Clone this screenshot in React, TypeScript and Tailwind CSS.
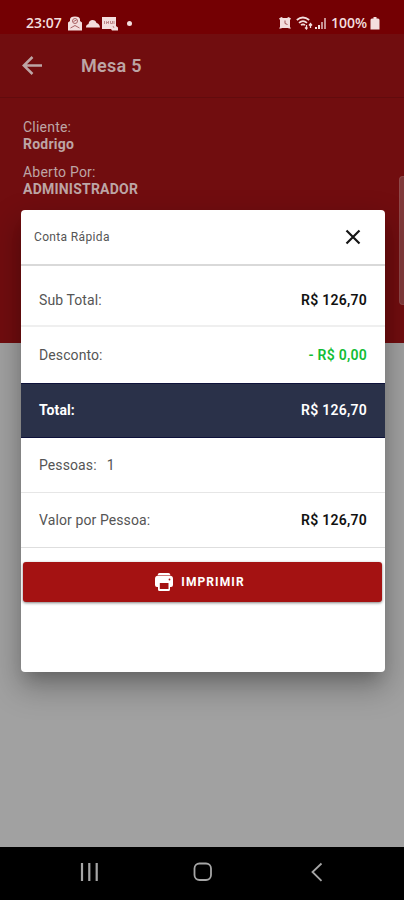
import type { ReactNode } from "react"

type RowProps = { label: string; value?: string; className?: string; valueClass?: string; children?: ReactNode }

function Row({ label, value, className = "", valueClass = "text-[#111]", children }: RowProps) {
  return (
    <div className={"flex items-center justify-between px-[18px] " + className}>
      <span>{label}{children}</span>
      {value && <span className={"text-[14px] font-semibold tracking-[0.25px] " + valueClass}>{value}</span>}
    </div>
  )
}

function StatusBar() {
  return (
    <div className="flex h-[34px] items-start justify-between bg-[#740003] pt-[14px] pr-[24px] pl-[26px] text-[#f3dede]">
      <div className="flex h-[18px] items-center">
        <span className="w-[41px] font-['Open_Sans',sans-serif] text-[14px] leading-[18px] font-semibold">23:07</span>
        <svg width="16" height="15" viewBox="0 0 16 15" fill="currentColor">
          <path d="M1 6.500 3 5V3.500Q3 .5 8 .5t5 3V5l2 1.500v8H1z" />
          <path d="M5.500 5q0-2.500 2.500-2.500T10.500 5 8 7.500 5.500 5M6.500 5.500l3-1.500M3.500 12 8 9.500l4.500 2.500" fill="none" stroke="#a15557" strokeWidth="0.900" />
        </svg>
        <svg className="ml-[3px]" width="14" height="15" viewBox="0 0 14 15" fill="currentColor">
          <path d="M0 11.500C0 9 1.200 8.500 2.500 8 3 5 4.500 4 6.500 4s3.500 1 4 3c2 .5 3.200 1.800 3.500 4.500z" />
        </svg>
        <svg className="ml-[2px]" width="16" height="15" viewBox="0 0 16 15" fill="currentColor">
          <path d="M0 1h14v9l2 1.500v3H10L9 13H0z" />
          <path d="M2.500 5v3M4.500 8V5.500l2 2V5M8.500 5v2.500h2V5M12 5v3M11 10l1 2" fill="none" stroke="#b87f80" strokeWidth="0.900" />
        </svg>
        <span className="ml-[9px] h-[5px] w-[5px] rounded-full bg-current" />
      </div>
      <div className="flex h-[18px] items-center">
        <svg width="12" height="14" viewBox="0 0 12 14" fill="currentColor">
          <path d="M0 2.500 2.500 1 4 2h4l1.500-1L12 2.500 11 4v7l1 1.500h-2L9 12H3l-1 .5H0L1 11V4z" />
          <path d="M6 4.500V7.500l2.500 1" fill="none" stroke="#a15557" />
        </svg>
        <svg className="ml-[5px]" width="17" height="14" viewBox="0 0 17 14" fill="none" stroke="currentColor" strokeWidth="1.700">
          <path d="M.8 4q6-5 12.400 0M3 6.800q4-3.500 8 0M5 9.200q2-1.800 4 0" />
          <path d="M10.500 9v4m-1.500-1.500 1.500 1.500 1-1.500M14.500 12V7.500m-1.500 2 1.500-2L16 9.500" strokeWidth="1.300" />
        </svg>
        <svg className="ml-[2px]" width="12" height="14" viewBox="0 0 12 14" fill="currentColor">
          <path d="M0 11h2v2H0zM3 9h2v4H3z" />
          <path d="M6 6h2v7H6zM9 2h2v11H9z" opacity=".65" />
        </svg>
        <span className="ml-[4px] w-[39px] font-['Open_Sans',sans-serif] text-[14px] leading-[18px] font-semibold">100%</span>
        <svg width="10" height="13" viewBox="0 0 10 13" fill="currentColor"><path d="M3.500 0h3v1.500H8q1.500 0 1.500 1.500v9.500H.5V3q0-1.500 1.500-1.500h1.500z" /></svg>
      </div>
    </div>
  )
}

function NavBar() {
  return (
    <nav className="flex h-[53px] items-start justify-between bg-black pt-[15px] pr-[80px] pl-[79px] text-[#a6a6a6]">
      <svg width="20" height="20" viewBox="0 0 20 20" stroke="currentColor" strokeWidth="2.200"><path d="M3 1v18M10.300 1v18M17.700 1v18" /></svg>
      <svg className="mr-[5px] ml-[2px]" width="20" height="20" viewBox="0 0 20 20" fill="none" stroke="currentColor" strokeWidth="1.800"><rect x="1.500" y="1.500" width="16.500" height="16.500" rx="5" /></svg>
      <svg width="14" height="20" viewBox="0 0 14 20" fill="none" stroke="currentColor" strokeWidth="1.800"><path d="M11.500 1.500 2.500 10l9 8.800" /></svg>
    </nav>
  )
}

export default function App() {
  return (
    <div className="flex h-[900px] w-[404px] flex-col overflow-hidden bg-[#a1a1a1] font-['Roboto',sans-serif]">
      <StatusBar />

      <main className="relative flex-1">
        <div className="h-[309px] bg-[#710d0f] text-[#bda5a5]">
          <header className="flex h-[64px] items-center border-b border-[#620b0d] pl-[22px]">
            <svg width="21" height="20" viewBox="0 0 21 20" fill="none" stroke="currentColor" strokeWidth="2.500">
              <path d="M20 9.500H2M10.500 1 1.800 9.500l8.700 8.500" />
            </svg>
            <h1 className="ml-[38px] text-[18px] font-semibold tracking-[0.3px]">Mesa 5</h1>
          </header>
          <div className="flex justify-between pt-[21px] pl-[23px] text-[14px] leading-[17px] tracking-[0.22px]">
            <div>
              <p>Cliente:</p>
              <p className="font-bold">Rodrigo</p>
              <p className="mt-[11px]">Aberto Por:</p>
              <p className="font-bold">ADMINISTRADOR</p>
            </div>
            <div className="mt-[57px] h-[129px] w-[5px] rounded-l-[4px] border border-r-0 border-[#8d4849] bg-[#80393a]" />
          </div>
        </div>

        <div className="absolute inset-0 flex items-center justify-center pl-[2px]">
          <section className="h-[462px] w-[364px] rounded-[4px] bg-white text-[14px] tracking-[0.1px] text-[#555] shadow-[0_11px_15px_-7px_rgba(0,0,0,0.2),0_14px_30px_3px_rgba(0,0,0,0.26)]">
            <div className="flex h-[56px] items-center justify-between border-b-2 border-[#d9d9d9] pr-[24px] pl-[13px]">
              <h2 className="text-[12px] tracking-[0.35px]">Conta Rápida</h2>
              <svg width="16" height="16" viewBox="0 0 16 16" stroke="#161616" strokeWidth="2.200"><path d="m1.500 1.500 13 13M14.500 1.500l-13 13" /></svg>
            </div>
            <Row label="Sub Total:" value="R$ 126,70" className="h-[61px] border-b-2 border-[#efefef] pt-[10px]" />
            <Row label="Desconto:" value="- R$ 0,00" className="h-[56px] pt-[2px]" valueClass="text-[#12bd35]" />
            <Row label="Total:" value="R$ 126,70" className="h-[55px] border-y border-[#0e123b] bg-[#2a3149] font-bold text-white" valueClass="text-white" />
            <Row label="Pessoas:" className="h-[55px] border-b border-[#e6e6e6] pt-[2px]"><span className="ml-[10px]">1</span></Row>
            <Row label="Valor por Pessoa:" value="R$ 126,70" className="h-[55px] border-b border-[#dedede] pt-[2px]" />
            <div className="pt-[14px] pr-[3px] pl-[2px]">
              <button className="flex h-[40px] w-full items-center justify-center rounded-[3px] bg-[#a41212] pr-[6px] text-[12px] font-bold tracking-[1.1px] text-white shadow-[0_1px_3px_rgba(0,0,0,0.5)]">
                <svg className="mr-[7px]" width="20" height="20" viewBox="0 0 20 20">
                  <path d="M5.500 1h9q1.500 0 2 2.200h-13q.5-2.200 2-2.200z" fill="#fff" />
                  <path d="M4 3.700h12q3 0 3 3V13q0 2-2 2h-1v2.500q0 1.500-1.500 1.500h-9Q4 19 4 17.500V15H3q-2 0-2-2V6.700q0-3 3-3z" fill="#fff" />
                  <path d="M5.800 11h8.700v6H5.800z" fill="#a41212" />
                  <circle cx="15.500" cy="7.500" r="0.900" fill="#a41212" />
                </svg>
                IMPRIMIR
              </button>
            </div>
          </section>
        </div>
      </main>

      <NavBar />
    </div>
  )
}
